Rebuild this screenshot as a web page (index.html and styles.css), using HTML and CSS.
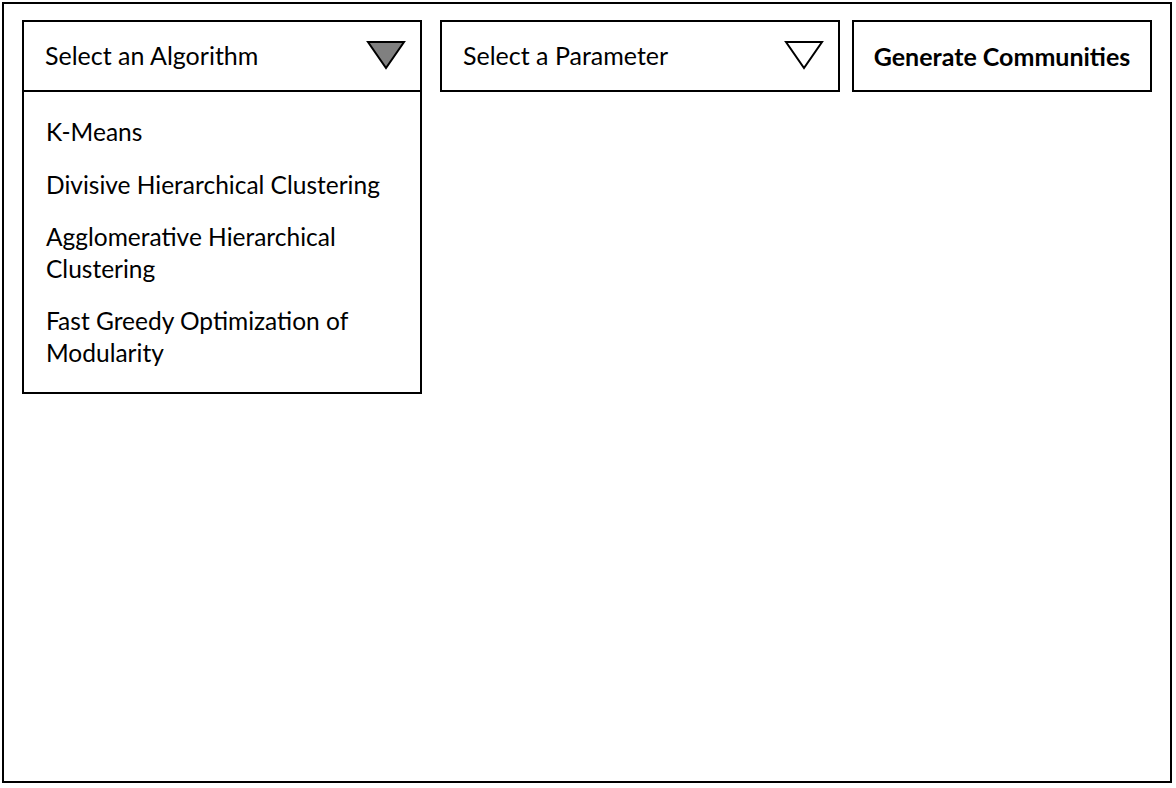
FILE: index.html
```html
<!DOCTYPE html>
<html>
<head>
<meta charset="utf-8">
<link rel="stylesheet" href="styles.css">
</head>
<body>
<div class="frame">
  <div class="toolbar">
    <div class="dropdown algo">
      <div class="dd-head">
        <span class="dd-label">Select an Algorithm</span>
        <svg class="caret" width="40" height="30" viewBox="0 0 40 30"><polygon points="2,2 38,2 20,28" fill="#808080" stroke="#000" stroke-width="2" stroke-linejoin="miter"/></svg>
      </div>
      <ul class="dd-list">
        <li>K-Means</li>
        <li>Divisive Hierarchical Clustering</li>
        <li>Agglomerative Hierarchical Clustering</li>
        <li>Fast Greedy Optimization of Modularity</li>
      </ul>
    </div>
    <div class="dropdown param">
      <div class="dd-head">
        <span class="dd-label">Select a Parameter</span>
        <svg class="caret" width="40" height="30" viewBox="0 0 40 30"><polygon points="2,2 38,2 20,28" fill="#fff" stroke="#000" stroke-width="2"/></svg>
      </div>
    </div>
    <button class="generate">Generate Communities</button>
  </div>
</div>
</body>
</html>
```
FILE: styles.css
```css
html, body {
  margin: 0;
  padding: 0;
  background: #fff;
}
body {
  font-family: "Lato", "Open Sans", sans-serif;
  color: #000;
}
.frame {
  box-sizing: border-box;
  margin: 2px 0 0 2px;
  width: 1170px;
  height: 781px;
  border: 2px solid #000;
  padding: 16px 18px;
}
.toolbar {
  display: flex;
  align-items: flex-start;
}
.dropdown {
  width: 400px;
  box-sizing: border-box;
  display: flex;
  flex-direction: column;
}
.algo {
  margin-right: 18px;
}
.param {
  margin-right: 12px;
}
.dd-head {
  box-sizing: border-box;
  height: 72px;
  border: 2px solid #000;
  display: flex;
  align-items: center;
  justify-content: space-between;
  padding: 0 14px 0 21px;
}
.dd-label {
  font-size: 25px;
  margin-top: -2px;
}
.caret {
  display: block;
  margin-top: -3px;
}
.dd-list {
  list-style: none;
  margin: 0;
  padding: 24px 40px 24px 22px;
  border: 2px solid #000;
  border-top: none;
  display: flex;
  flex-direction: column;
  gap: 21px;
}
.dd-list li {
  font-size: 24.5px;
  line-height: 31.5px;
}
.generate {
  box-sizing: border-box;
  width: 300px;
  height: 72px;
  border: 2px solid #000;
  background: #fff;
  font-family: "Lato", "Open Sans", sans-serif;
  font-weight: bold;
  font-size: 25px;
  color: #000;
  padding: 0;
  cursor: pointer;
}
```
